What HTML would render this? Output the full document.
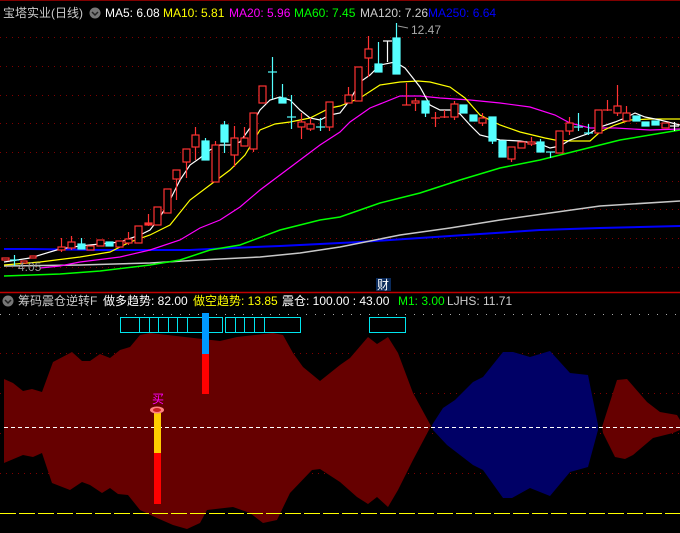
<!DOCTYPE html>
<html><head><meta charset="utf-8"><style>
html,body{margin:0;padding:0;background:#000;width:680px;height:533px;overflow:hidden}
svg{display:block}
text{font-family:"Liberation Sans","Noto Sans CJK SC",sans-serif;font-size:12px}
</style></head><body>
<svg width="680" height="533" viewBox="0 0 680 533" xmlns="http://www.w3.org/2000/svg">
<rect width="680" height="533" fill="#000"/>
<line x1="0" y1="0.5" x2="680" y2="0.5" stroke="#800000"/>
<!-- grid -->
<g stroke="#800000" stroke-dasharray="1,5" stroke-width="1">
<line x1="0" y1="37.5" x2="680" y2="37.5"/><line x1="0" y1="66.5" x2="680" y2="66.5"/>
<line x1="0" y1="95.5" x2="680" y2="95.5"/><line x1="0" y1="123.5" x2="680" y2="123.5"/>
<line x1="0" y1="152.5" x2="680" y2="152.5"/><line x1="0" y1="181.5" x2="680" y2="181.5"/>
<line x1="0" y1="209.5" x2="680" y2="209.5"/><line x1="0" y1="238.5" x2="680" y2="238.5"/>
<line x1="0" y1="267.5" x2="680" y2="267.5"/>
<line x1="0" y1="353.5" x2="680" y2="353.5"/><line x1="0" y1="393.5" x2="680" y2="393.5"/>
<line x1="0" y1="433.5" x2="680" y2="433.5"/><line x1="0" y1="473.5" x2="680" y2="473.5"/>
</g>
<line x1="0" y1="314.5" x2="680" y2="314.5" stroke="#aaa" stroke-dasharray="1,8"/>
<!-- MAs -->
<g fill="none" stroke-width="1.2">
<polyline stroke="#0000ff" stroke-width="2" points="4,249 30,249 100,250 190,250 230,248 280,246 340,243 360,242 420,238 480,234 540,230 600,228 680,226"/>
<polyline stroke="#c8c8c8" stroke-width="1.5" points="4,266 80,265 150,263 200,260 260,257 300,253 340,247 400,235 450,228 500,220 550,213 600,206 680,201"/>
<polyline stroke="#00ff00" stroke-width="1.5" points="4,276 60,274 100,271 150,265 180,260 210,250 240,245 280,230 320,220 340,217 380,203 420,193 460,180 500,168 540,160 580,150 620,140 680,130"/>
<polyline stroke="#ff00ff" points="40,268 60,266 80,262 120,257 150,250 180,240 200,228 220,220 240,207 260,190 280,175 300,160 320,145 340,132 350,122 370,108 400,96 420,96 440,98 470,100 500,103 530,107 555,115 570,123 590,128 615,128 650,130 680,129"/>
<polyline stroke="#ffff00" points="4,265 40,262 80,257 110,252 130,242 150,235 170,225 190,200 210,185 230,170 245,155 260,130 275,124 290,122 310,118 330,108 340,106 360,98 380,85 400,82 418,81 430,82 450,87 465,98 480,115 500,125 520,132 545,138 555,140 570,141 590,141 600,132 615,125 630,120 650,119 680,119"/>
<polyline stroke="#ffffff" points="4,262 30,258 60,249 80,246 100,244 120,242 140,235 150,230 160,217 170,200 180,180 190,165 200,158 210,150 220,145 230,145 240,142 250,128 260,110 270,100 280,97 290,100 300,110 310,118 320,120 330,115 340,113 350,100 360,82 370,75 380,65 395,62 405,68 420,87 430,105 440,110 450,110 460,114 470,125 480,135 500,140 520,141 540,144 550,148 560,146 570,140 590,133 600,127 615,122 625,118 635,113 645,117 660,120 680,125"/>
</g>
<!-- candles -->
<g stroke="#ff3333" stroke-width="1.2" fill="#000">
<line x1="61.5" y1="238" x2="61.5" y2="252"/><rect x="58" y="247" width="7" height="3"/>
<line x1="71.5" y1="236" x2="71.5" y2="250"/><rect x="68" y="242" width="7" height="6"/>
<rect x="87" y="246" width="7" height="4"/><rect x="97" y="240" width="7" height="6"/>
<rect x="116" y="241" width="7" height="6"/>
<line x1="128.5" y1="232" x2="128.5" y2="245"/><rect x="125" y="239" width="7" height="4"/>
<rect x="135" y="226" width="7" height="17"/>
<line x1="148.5" y1="214" x2="148.5" y2="226"/><rect x="145" y="223" width="7" height="2" fill="#ff3333"/>
<rect x="154" y="207" width="7" height="18"/>
<rect x="164" y="189" width="7" height="24"/>
<line x1="176.5" y1="170" x2="176.5" y2="200"/><rect x="173" y="170" width="7" height="9"/>
<line x1="186.5" y1="149" x2="186.5" y2="178"/><rect x="183" y="149" width="7" height="13"/>
<line x1="195.5" y1="127" x2="195.5" y2="160"/><rect x="192" y="135" width="7" height="12"/>
<line x1="215.5" y1="141" x2="215.5" y2="182"/><rect x="212" y="145" width="7" height="37"/>
<line x1="234.5" y1="126" x2="234.5" y2="167"/><rect x="231" y="138" width="7" height="17"/>
<line x1="244.5" y1="127" x2="244.5" y2="146"/><rect x="241" y="138" width="7" height="8"/>
<line x1="253.5" y1="113" x2="253.5" y2="152"/><rect x="250" y="113" width="7" height="36"/>
<rect x="259" y="86" width="7" height="17"/>
<line x1="301.5" y1="113" x2="301.5" y2="139"/><rect x="298" y="122" width="7" height="5"/>
<line x1="310.5" y1="118" x2="310.5" y2="131"/><rect x="307" y="124" width="7" height="5"/>
<line x1="329.5" y1="102" x2="329.5" y2="131"/><rect x="326" y="102" width="7" height="25"/>
<line x1="348.5" y1="87" x2="348.5" y2="103"/><rect x="345" y="95" width="7" height="8"/>
<rect x="355" y="67" width="7" height="34"/>
<line x1="368.5" y1="36" x2="368.5" y2="77"/><rect x="365" y="49" width="7" height="9"/>
<line x1="406.5" y1="83" x2="406.5" y2="105"/><line x1="402" y1="105" x2="411" y2="105"/>
<line x1="415.5" y1="98" x2="415.5" y2="111"/><rect x="412" y="101" width="7" height="2"/>
<line x1="435.5" y1="112" x2="435.5" y2="127"/><line x1="431" y1="118" x2="440" y2="118"/>
<line x1="444.5" y1="110" x2="444.5" y2="118"/><line x1="440" y1="117" x2="449" y2="117"/>
<line x1="454.5" y1="101" x2="454.5" y2="120"/><rect x="451" y="104" width="7" height="13"/>
<line x1="482.5" y1="113" x2="482.5" y2="126"/><rect x="479" y="118" width="7" height="5"/>
<line x1="511.5" y1="147" x2="511.5" y2="162"/><rect x="508" y="147" width="7" height="12"/>
<rect x="518" y="142" width="7" height="6"/>
<line x1="531.5" y1="137" x2="531.5" y2="146"/><rect x="528" y="142" width="7" height="2"/>
<rect x="556" y="131" width="7" height="22"/>
<line x1="569.5" y1="117" x2="569.5" y2="135"/><rect x="566" y="123" width="7" height="8"/>
<rect x="595" y="110" width="7" height="23"/>
<line x1="607.5" y1="100" x2="607.5" y2="111"/><line x1="603" y1="110" x2="612" y2="110"/>
<line x1="617.5" y1="85" x2="617.5" y2="116"/><rect x="614" y="106" width="7" height="7"/>
<line x1="626.5" y1="106" x2="626.5" y2="121"/><rect x="623" y="113" width="7" height="8"/>
<rect x="662" y="123" width="7" height="5"/>
<rect x="2" y="258" width="7" height="2"/><rect x="21" y="261" width="6" height="2"/><rect x="30" y="256" width="6" height="2"/>
</g>
<g stroke="#55ffff" stroke-width="1.2" fill="#55ffff">
<line x1="14.5" y1="255" x2="14.5" y2="266"/><line x1="10" y1="260" x2="19" y2="260"/>
<line x1="81.5" y1="238" x2="81.5" y2="249"/><rect x="78" y="244" width="7" height="5"/>
<rect x="106" y="242" width="7" height="4"/>
<line x1="205.5" y1="138" x2="205.5" y2="160"/><rect x="202" y="141" width="7" height="19"/>
<line x1="224.5" y1="121" x2="224.5" y2="153"/><rect x="221" y="125" width="7" height="17"/>
<line x1="272.5" y1="57" x2="272.5" y2="99"/><line x1="268" y1="72" x2="277" y2="72"/>
<line x1="282.5" y1="84" x2="282.5" y2="103"/><rect x="279" y="98" width="7" height="5"/>
<line x1="291.5" y1="95" x2="291.5" y2="129"/><line x1="287" y1="117" x2="296" y2="117"/>
<line x1="320.5" y1="118" x2="320.5" y2="131"/><line x1="316" y1="127" x2="325" y2="127"/>
<line x1="378.5" y1="42" x2="378.5" y2="72"/><rect x="375" y="64" width="7" height="8"/>
<line x1="396.5" y1="23" x2="396.5" y2="74"/><rect x="393" y="38" width="7" height="36"/>
<line x1="425.5" y1="101" x2="425.5" y2="117"/><rect x="422" y="101" width="7" height="12"/>
<rect x="460" y="105" width="7" height="8"/>
<rect x="470" y="115" width="7" height="6"/>
<line x1="492.5" y1="117" x2="492.5" y2="144"/><rect x="489" y="117" width="7" height="24"/>
<rect x="499" y="141" width="7" height="16"/>
<line x1="540.5" y1="139" x2="540.5" y2="152"/><rect x="537" y="142" width="7" height="10"/>
<line x1="550.5" y1="152" x2="550.5" y2="158"/><line x1="546" y1="152" x2="555" y2="152"/>
<line x1="578.5" y1="113" x2="578.5" y2="131"/><line x1="574" y1="127" x2="583" y2="127"/>
<line x1="588.5" y1="124" x2="588.5" y2="135"/><line x1="584" y1="133" x2="593" y2="133"/>
<rect x="633" y="116" width="7" height="5"/>
<rect x="642" y="122" width="7" height="4"/>
<rect x="652" y="121" width="7" height="4"/>
</g>
<g stroke="#fff" stroke-width="1.2">
<line x1="387.5" y1="41" x2="387.5" y2="62"/><line x1="383" y1="41" x2="392" y2="41"/>
<line x1="674.5" y1="122" x2="674.5" y2="131"/><line x1="670" y1="126" x2="679" y2="126"/>
</g>
<text x="18" y="271" fill="#999">4.05</text>
<line x1="398" y1="26" x2="408" y2="28" stroke="#999"/>
<text x="411" y="34" fill="#aaa">12.47</text>
<rect x="376" y="278" width="15" height="13" fill="#0a2a5a"/>
<text x="377" y="289" fill="#fff" font-size="11">财</text>
<line x1="0" y1="292.5" x2="680" y2="292.5" stroke="#c00000" stroke-width="1.5"/>
<!-- header -->
<text x="3" y="17" fill="#ccc" font-size="13">宝塔实业(日线)</text>
<circle cx="95" cy="13" r="5.5" fill="#777"/><path d="M92 12l3 3 3-3" stroke="#222" stroke-width="1.5" fill="none"/>
<text x="105" y="17" fill="#fff">MA5: 6.08</text>
<text x="163" y="17" fill="#ffff00">MA10: 5.81</text>
<text x="229" y="17" fill="#ff00ff">MA20: 5.96</text>
<text x="294" y="17" fill="#00ff00">MA60: 7.45</text>
<text x="360" y="17" fill="#ccc">MA120: 7.26</text>
<text x="428" y="17" fill="#0000ff">MA250: 6.64</text>
<circle cx="8" cy="301" r="5.5" fill="#777"/><path d="M5 300l3 3 3-3" stroke="#222" stroke-width="1.5" fill="none"/>
<text x="18" y="305" fill="#ccc">筹码震仓逆转F</text>
<text x="103" y="305" fill="#fff">做多趋势: 82.00</text>
<text x="193" y="305" fill="#ffff00">做空趋势: 13.85</text>
<text x="282" y="305" fill="#fff">震仓: 100.00 : 43.00</text>
<text x="398" y="305" fill="#00ff00">M1: 3.00</text>
<text x="447" y="305" fill="#ccc">LJHS: 11.71</text>
<!-- lower fills -->
<polygon fill="#660000" points="4,379 13,383 23,391 32,389 42,392 53,362 72,352 82,361 90,361 100,354 110,358 120,350 130,347 140,335 150,333 220,341 237,337 273,333 283,335 293,353 303,367 320,381 340,365 350,358 368,337 377,344 388,337 398,353 413,393 431,426 413,460 398,490 388,507 377,497 368,504 357,497 340,482 320,469 312,470 290,493 277,520 263,523 250,513 233,507 207,510 200,523 187,529 173,525 157,518 140,510 128,495 118,494 110,488 102,493 90,485 82,482 70,490 52,483 42,453 33,457 23,455 4,463"/>
<polygon fill="#000066" points="432,425 443,408 455,400 473,382 483,377 503,352 513,352 530,357 550,351 570,373 588,375 598,425 598,430 588,467 570,472 550,496 530,488 512,498 503,498 483,470 473,465 447,445 433,430"/>
<polygon fill="#660000" points="602,427 617,380 627,379 647,402 660,412 677,415 680,420 680,430 673,433 653,438 633,455 625,459 615,457 603,433"/>
<line x1="4" y1="427.5" x2="680" y2="427.5" stroke="#fff" stroke-dasharray="4,3"/>
<line x1="0" y1="513.5" x2="680" y2="513.5" stroke="#ffff00" stroke-dasharray="16,3"/>
<!-- boxes -->
<g fill="none" stroke="#00e5ee" stroke-width="1">
<rect x="120.5" y="317.5" width="102" height="15"/>
<line x1="139.5" y1="318" x2="139.5" y2="332"/><line x1="149.5" y1="318" x2="149.5" y2="332"/>
<line x1="158.5" y1="318" x2="158.5" y2="332"/><line x1="168.5" y1="318" x2="168.5" y2="332"/>
<line x1="177.5" y1="318" x2="177.5" y2="332"/><line x1="187.5" y1="318" x2="187.5" y2="332"/>
<rect x="225.5" y="317.5" width="75" height="15"/>
<line x1="235.5" y1="318" x2="235.5" y2="332"/><line x1="244.5" y1="318" x2="244.5" y2="332"/>
<line x1="254.5" y1="318" x2="254.5" y2="332"/><line x1="264.5" y1="318" x2="264.5" y2="332"/>
<rect x="369.5" y="317.5" width="36" height="15"/>
</g>
<rect x="202" y="313" width="7" height="41" fill="#0099ff"/>
<rect x="202" y="354" width="7" height="40" fill="#ff0000"/>
<rect x="154" y="413" width="7" height="40" fill="#ffcc00"/>
<rect x="154" y="453" width="7" height="51" fill="#ff0000"/>
<ellipse cx="157" cy="410" rx="7" ry="3.5" fill="#ff8080"/>
<ellipse cx="157" cy="410" rx="4" ry="2" fill="#cc2020"/>
<text x="152" y="403" fill="#ff00ff" font-size="11">买</text>
</svg>
</body></html>
